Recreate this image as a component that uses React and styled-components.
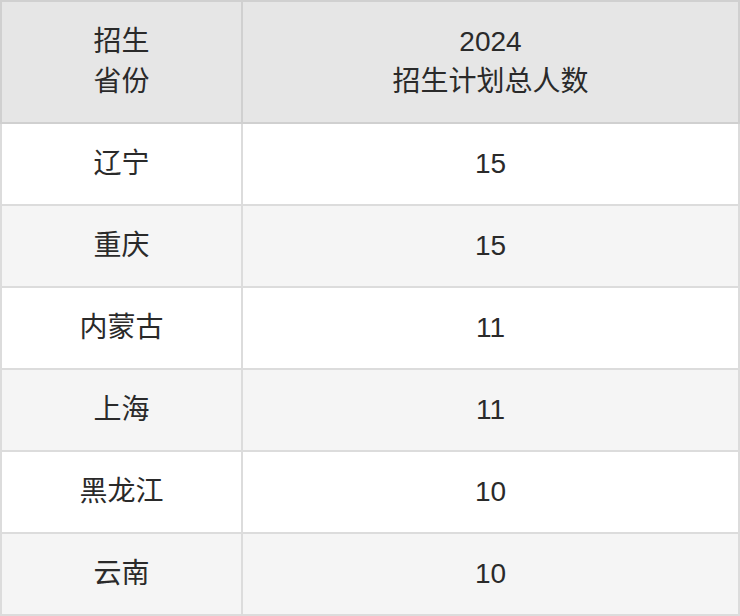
import React from 'react'
import styled, { createGlobalStyle } from 'styled-components';

const GlobalStyle = createGlobalStyle`
  body {
    margin: 0;
    background: #ffffff;
    font-family: "Liberation Sans", "Noto Sans CJK SC", sans-serif;
  }
`
const Table = styled.table`
  width: 740px;
  border-collapse: collapse;
  table-layout: fixed;
  color: #2a2a2a;
  font-size: 28px;
`
const HeadCell = styled.th`
  height: 120px;
  padding: 0;
  background-color: #e6e6e6;
  border: 2px solid #d0d0d0;
  font-weight: 400;
  line-height: 40px;
  text-align: center;
  vertical-align: middle;
`
const Row = styled.tr`
  background-color: ${(props) => props.$odd ? "#f5f5f5" : "#ffffff"};
`
const Cell = styled.td`
  height: 80px;
  padding: 0;
  border: 2px solid #dcdcdc;
  line-height: 40px;
  text-align: center;
  vertical-align: middle;
`

const rows = [
    ["辽宁", "15"],
    ["重庆", "15"],
    ["内蒙古", "11"],
    ["上海", "11"],
    ["黑龙江", "10"],
    ["云南", "10"],
]

const App = () => {
    return (
        <>
            <GlobalStyle />
            <Table>
                <colgroup>
                    <col style={{ width: 241 }} />
                    <col />
                </colgroup>
                <thead>
                    <tr>
                        <HeadCell>招生<br />省份</HeadCell>
                        <HeadCell>2024<br />招生计划总人数</HeadCell>
                    </tr>
                </thead>
                <tbody>
                    {rows.map(([province, total], i) => (
                        <Row key={province} $odd={i % 2 === 1}>
                            <Cell>{province}</Cell>
                            <Cell>{total}</Cell>
                        </Row>
                    ))}
                </tbody>
            </Table>
        </>
    )
}

export default App
